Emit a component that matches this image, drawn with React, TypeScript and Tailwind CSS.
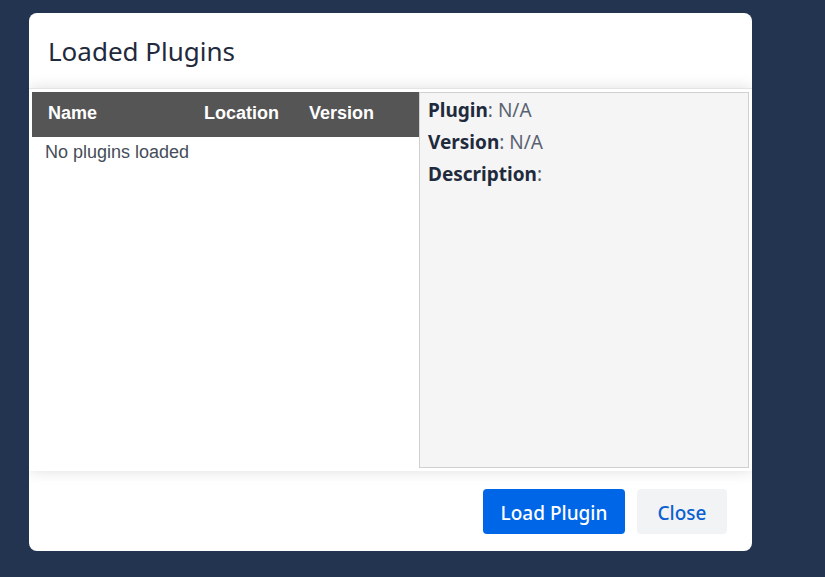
export default function App() {
  const cols = [
    { label: "Name", w: "w-[156px]" },
    { label: "Location", w: "w-[105px]" },
    { label: "Version", w: "flex-1" },
  ];

  return (
    <div className="h-[577px] w-[825px] overflow-hidden bg-[#22344f] pl-[29px] pt-[13px] font-['Noto_Sans',sans-serif]">
      <div className="flex h-[538px] w-[723px] flex-col overflow-hidden rounded-lg bg-white">
        <div className="flex h-[75px] shrink-0 items-center px-[19px]">
          <h1 className="text-[26px] leading-none text-[#1f2a3c]">Loaded Plugins</h1>
        </div>

        <div className="relative z-10 flex h-[383px] shrink-0 border-t border-[#e4e4e4] bg-white p-[3px] shadow-[0_0_14px_rgba(0,0,0,0.13)]">
          <div className="w-[387px] font-['Liberation_Sans',Arial,sans-serif]">
            <div className="flex h-[45px] items-center bg-[#555555] pb-[2px] pl-4 text-[18px] font-bold text-white">
              {cols.map((c) => (
                <div key={c.label} className={c.w}>
                  {c.label}
                </div>
              ))}
            </div>
            <div className="px-[13px] pt-[3px] text-[18px] leading-[24px] text-[#454d5a]">No plugins loaded</div>
          </div>

          <div className="flex-1 border border-[#d0d0d0] bg-[#f5f5f5] px-2 pt-[1px] text-[19px] leading-[32px] text-[#5a6271]">
            <div>
              <span className="font-bold text-[#1f2a3c]">Plugin</span>: N/A
            </div>
            <div>
              <span className="font-bold text-[#1f2a3c]">Version</span>: N/A
            </div>
            <div>
              <span className="font-bold text-[#1f2a3c]">Description</span>:
            </div>
          </div>
        </div>

        <div className="flex flex-1 items-start justify-end gap-3 pr-[25px] pt-[18px]">
          <button className="h-[45px] w-[142px] rounded bg-[#0066e8] pt-[3px] text-[19px] font-medium text-white">
            Load Plugin
          </button>
          <button className="h-[45px] w-[90px] rounded bg-[#f1f3f5] pt-[3px] text-[19px] font-medium text-[#0b5fd2]">
            Close
          </button>
        </div>
      </div>
    </div>
  );
}
